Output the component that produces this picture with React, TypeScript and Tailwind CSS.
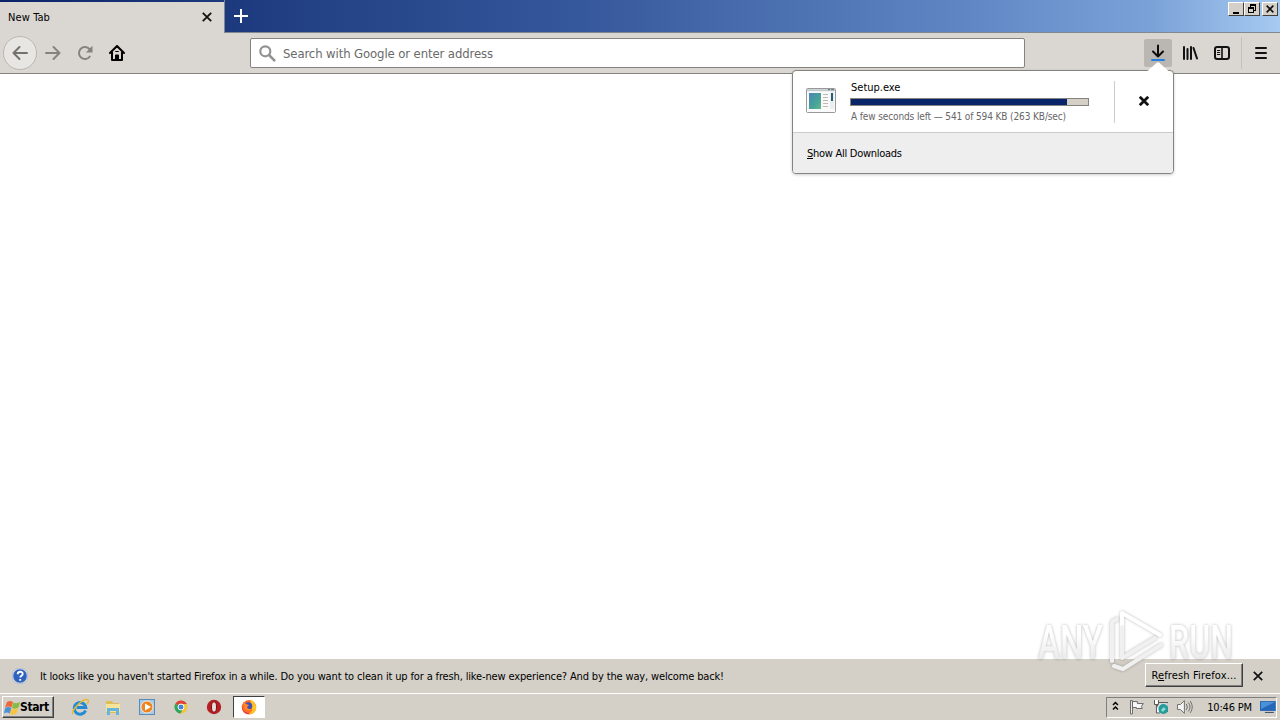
import React from 'react';

const WindowButton: React.FC<{ children: React.ReactNode }> = ({ children }) => (
  <div className="w-4 h-3.5 bg-[#d4d0c8] border border-t-white border-l-white border-r-[#404040] border-b-[#404040] flex items-center justify-center">
    {children}
  </div>
);

const CloseIcon: React.FC<{ size: number; width: number }> = ({ size, width }) => (
  <svg width={size} height={size} viewBox="0 0 10 10" className="shrink-0" stroke="#111" strokeWidth={width} fill="none">
    <path d="M0.8 0.8L9.2 9.2M9.2 0.8L0.8 9.2" />
  </svg>
);

const TitleBar = () => (
  <div className="h-[33px] flex bg-[linear-gradient(90deg,#0a246a_0%,#1f3c80_20%,#35579b_45%,#5f86c3_75%,#7ba2d8_90%,#a6caf0_100%)]">
    <div className="w-56 h-[31px] mt-0.5 bg-[#dad7d2] flex items-start justify-between pl-2 pr-3 shrink-0">
      <span className="mt-2 text-[11px] leading-4 tracking-[0.1px] text-black">New Tab</span>
      <div className="mt-[10px]"><CloseIcon size={10} width={1.8} /></div>
    </div>
    <div className="flex-1 flex justify-between border-b border-l border-[#808890]">
      <svg width="14" height="14" viewBox="0 0 14 14" className="mt-[9px] ml-[9px]" stroke="#fff" strokeWidth="2">
        <path d="M7 0v14M0 7h14" />
      </svg>
      <div className="flex mt-0.5 mr-0.5 h-3.5">
        <WindowButton>
          <svg width="14" height="12" viewBox="0 0 14 12"><path d="M4 9h6v2H4z" fill="#000" /></svg>
        </WindowButton>
        <WindowButton>
          <svg width="14" height="12" viewBox="0 0 14 12" fill="none" stroke="#000" shapeRendering="crispEdges">
            <path d="M5.5 5V2.5h5v5H9M5 1.5h6" />
            <path d="M3.5 5.5h5v4h-5zM3 4.5h6" />
          </svg>
        </WindowButton>
        <div className="w-0.5" />
        <WindowButton><CloseIcon size={8} width={2} /></WindowButton>
      </div>
    </div>
  </div>
);

const Toolbar = () => (
  <div className="h-[41px] bg-[#dad7d2] border-b border-[#85837f] flex items-center">
    <div className="w-[250px] flex items-center pl-[3px] shrink-0">
      <div className="w-[34px] h-[34px] rounded-full bg-[#e8e6e2] border border-[#bbb8b3] flex items-center justify-center">
        <svg width="16" height="16" viewBox="0 0 16 16" fill="none" stroke="#74726e" strokeWidth="2" strokeLinecap="round" strokeLinejoin="round">
          <path d="M15 8H1.5M7.5 2l-6 6 6 6" />
        </svg>
      </div>
      <svg width="16" height="16" viewBox="0 0 16 16" className="ml-2" fill="none" stroke="#85837f" strokeWidth="2" strokeLinecap="round" strokeLinejoin="round">
        <path d="M1 8h13.5M8.5 2l6 6-6 6" />
      </svg>
      <svg width="16" height="16" viewBox="0 0 16 16" className="ml-4" fill="none" stroke="#85837f" strokeWidth="2" strokeLinecap="round">
        <path d="M12.8 11.5A6 6 0 1 1 12.5 4" />
        <path d="M15.5 0.8v6.7H8.8z" fill="#85837f" stroke="none" />
      </svg>
      <svg width="16" height="16" viewBox="0 0 16 16" className="ml-4" fill="none" stroke="#000" strokeWidth="2" strokeLinecap="round" strokeLinejoin="round">
        <path d="M1 8l7-7 7 7M3 7v8h10V7" />
        <path d="M7 14v-3.5h2V14" />
        <path d="M6.7 6.5h2.6" strokeWidth="1" />
      </svg>
    </div>
    <div className="w-[775px] h-[30px] bg-white border border-[#85837f] rounded-[2px] flex items-center pl-2 shrink-0">
      <svg width="17" height="17" viewBox="0 0 17 17" fill="none" stroke="#929292" strokeWidth="2.2" strokeLinecap="round">
        <circle cx="6.3" cy="6.3" r="5" />
        <path d="M10 10l5.3 5.3" strokeWidth="2.6" />
      </svg>
      <span className="ml-[7px] mt-0.5 text-[13px] tracking-[-0.11px] text-[#6a6a6a]">Search with Google or enter address</span>
    </div>
    <div className="flex-1 flex items-center justify-end pr-3">
      <div className="w-7 h-7 bg-[#bab7b2] rounded-[2px] flex items-center justify-center">
        <svg width="16" height="18" viewBox="0 0 16 18" fill="none" stroke="#0c0c0d" strokeWidth="2" strokeLinecap="round" strokeLinejoin="round">
          <path d="M8 1.5v11M3 7.5l5 5 5-5" />
          <path d="M2 16h12" stroke="#2480df" />
        </svg>
      </div>
      <svg width="16" height="16" viewBox="0 0 16 16" className="ml-[10px]" fill="none" stroke="#111" strokeLinecap="round">
        <path d="M2 2v12M5.5 4v10M9 2v12M11.5 3L15 13.5" strokeWidth="2" />
      </svg>
      <svg width="16" height="16" viewBox="0 0 16 16" className="ml-4" fill="none" stroke="#111" strokeWidth="2">
        <rect x="1" y="2" width="14" height="12" rx="2.2" />
        <path d="M8 2v12" strokeWidth="1.6" />
        <path d="M3 5.5h3.2M3 7.5h3.2M3 9.5h3.2" strokeWidth="1" />
      </svg>
      <div className="w-px h-8 bg-[#c4c1bb] ml-[11px]" />
      <svg width="14" height="14" viewBox="0 0 14 14" className="ml-3" stroke="#111" strokeWidth="2" strokeLinecap="round">
        <path d="M2 2h10M2 7h10M2 12h10" />
      </svg>
    </div>
  </div>
);

const DownloadsPanel = () => (
  <div className="absolute left-[792px] top-[70px] w-[382px] h-[104px] border border-[#85837f] rounded-[4px] bg-white shadow-[0_1px_3px_rgba(0,0,0,0.2)]">
    <svg width="22" height="10" viewBox="0 0 22 10" className="absolute right-1 -top-[9px]">
      <path d="M0 9.5L10 0.5h2l10 9z" fill="#fff" />
    </svg>
    <div className="h-[61px] flex">
      <svg width="32" height="28" viewBox="0 0 32 28" className="ml-3 mt-4">
        <defs>
          <linearGradient id="preview" x1="0" y1="0" x2="1" y2="1">
            <stop offset="0" stopColor="#4d84b6" />
            <stop offset="0.6" stopColor="#45a497" />
            <stop offset="1" stopColor="#66b889" />
          </linearGradient>
        </defs>
        <rect x="1.5" y="1.5" width="29" height="24" rx="1" fill="#fafafa" stroke="#999" />
        <path d="M2 3.2h28" stroke="#c2c8cd" strokeWidth="2" />
        <path d="M23 2.7h2M26 2.7h3" stroke="#596a78" />
        <rect x="4" y="6" width="12" height="16" fill="url(#preview)" />
        <path d="M18 7.5h5M18 10.5h5M18 13.5h5M18 16.5h5M18 19.5h5" stroke="#c4b7ad" />
        <rect x="25" y="5" width="4" height="17" fill="#eaeff1" />
        <path d="M27 6v8" stroke="#285c77" strokeWidth="2" />
      </svg>
      <div className="ml-[13px] pt-[10px] w-[239px]">
        <div className="pl-px text-[11px] leading-[14px] text-black">Setup.exe</div>
        <div className="mt-[3px] w-[239px] h-2 bg-[#d4d0c8] border border-[#85837f]">
          <div className="h-full bg-[#0a246a]" style={{ width: '91%' }} />
        </div>
        <div className="mt-1 pl-px text-[10px] leading-[13px] tracking-[-0.12px] text-[#666] whitespace-nowrap">A few seconds left — 541 of 594 KB (263 KB/sec)</div>
      </div>
      <div className="w-px h-[42px] bg-[#ccc] mt-2.5 ml-[25px]" />
      <div className="mt-[25px] ml-6"><CloseIcon size={10} width={2.7} /></div>
    </div>
    <div className="h-[41px] bg-[#eee] border-t border-[#ccc] rounded-b-[3px] flex items-center pl-[14px] pt-0.5 text-[11px] tracking-[-0.27px] text-black">
      <span><u>S</u>how All Downloads</span>
    </div>
  </div>
);

const Watermark = () => (
  <svg width="210" height="76" viewBox="0 0 210 76" className="absolute left-[1030px] top-[602px] overflow-visible drop-shadow-[0_0_1.5px_rgba(0,0,0,0.28)]" fontFamily="Roboto" fontWeight="500">
    <defs>
      <linearGradient id="fade" x1="0" y1="0" x2="0" y2="1">
        <stop offset="0.35" stopColor="#fff" />
        <stop offset="0.8" stopColor="#eaeaea" />
      </linearGradient>
    </defs>
    <g fill="url(#fade)">
      <text x="8" y="57" fontSize="48" textLength="65" lengthAdjust="spacingAndGlyphs">ANY</text>
      <text x="139" y="57" fontSize="48" textLength="64" lengthAdjust="spacingAndGlyphs">RUN</text>
    </g>
    <g fill="none" stroke="#f0f0f0" strokeWidth="4" strokeLinejoin="round" strokeLinecap="round">
      <path d="M82 59V20l5-3" />
      <path d="M92 50V11L130 33" stroke="#fff" />
      <path d="M92 25v31l33-20" />
      <path d="M84 64l9 3 38-24" />
    </g>
  </svg>
);

const NotificationBar = () => (
  <div className="h-[34px] bg-[#d4d0c8] flex items-center text-[11px] text-black">
    <svg width="16" height="16" viewBox="0 0 16 16" className="ml-3">
      <circle cx="8" cy="8" r="7.3" fill="#2f62bd" stroke="#dce5f3" />
      <circle cx="8" cy="8" r="7.8" fill="none" stroke="#8fa2c4" strokeWidth="0.5" />
      <path d="M5.7 6.3c0-3.5 5-3.2 5-.4 0 1.8-2.5 1.8-2.5 3.7M8.2 11v1.8" fill="none" stroke="#fff" strokeWidth="1.9" />
    </svg>
    <span className="ml-3 mt-0.5 tracking-[-0.146px] whitespace-nowrap">It looks like you haven't started Firefox in a while. Do you want to clean it up for a fresh, like-new experience? And by the way, welcome back!</span>
    <div className="flex-1" />
    <button className="w-[98px] h-6 mb-0.5 pt-0.5 border border-t-white border-l-white border-r-[#404040] border-b-[#404040] shadow-[inset_-1px_-1px_#808080] tracking-[0.15px] whitespace-nowrap">
      R<u>e</u>fresh Firefox...
    </button>
    <div className="ml-2.5 mr-[17px]"><CloseIcon size={10} width={1.7} /></div>
  </div>
);

const Taskbar = () => (
  <div className="h-[27px] bg-[#d4d0c8] border-t border-white flex items-center text-[11px] text-black">
    <div className="w-[52px] h-[22px] ml-0.5 border border-t-white border-l-white border-r-[#404040] border-b-[#404040] shadow-[inset_-1px_-1px_#808080] flex items-center">
      <svg width="16" height="17" viewBox="0 0 16 16" className="ml-px shrink-0">
        <path d="M3 2.5q3-2 6 0L7.5 8q-3-2-6.5 0z" fill="#ed6839" />
        <path d="M9.5 3q3 1.5 6.5-.5L14.5 8q-3 2-6.5 .5z" fill="#86bc43" />
        <path d="M1.3 8.5q3-2 6 0L5.8 14q-3-2-6 0z" fill="#4c91d1" />
        <path d="M7.8 9q3 1.5 6.5-.5L12.5 14q-3 2-6.5 .5z" fill="#f8c33e" />
      </svg>
      <span className="font-bold text-[12px] tracking-[-0.4px]">Start</span>
    </div>
    <svg width="18" height="18" viewBox="0 0 18 18" className="ml-[17px]" fill="none">
      <path d="M14.5 12.5A5.8 5.8 0 1 1 14.8 9.5H5.5" stroke="#238bd4" strokeWidth="3" />
      <path d="M2 16C-1 13 13-1 17 2c1 1 0 3-1 4" stroke="#e7b92d" strokeWidth="1.5" />
    </svg>
    <svg width="18" height="18" viewBox="0 0 18 18" className="ml-[15px]">
      <path d="M2 3h6l1 2h6v10H2z" fill="#e0bd58" />
      <path d="M2 6h14v8H2z" fill="#f8e39a" />
      <path d="M3 17v-7h12v7h-3v-4H6v4z" fill="#65b5dc" />
    </svg>
    <svg width="18" height="18" viewBox="0 0 18 18" className="ml-4">
      <rect x="1.5" y="1.5" width="15" height="15" fill="#a9cae5" stroke="#568bbb" />
      <circle cx="9" cy="9" r="6" fill="#ef851f" stroke="#fff" strokeWidth="0.7" />
      <path d="M7 5.5v7l6-3.5z" fill="#fff" />
    </svg>
    <svg width="16" height="16" viewBox="0 0 16 16" className="ml-[17px]">
      <circle cx="8" cy="8" r="6.5" fill="#f4c534" />
      <path d="M8 8L2.3 4.8A6.5 6.5 0 0 1 13.8 5H8z" fill="#db4437" />
      <path d="M8 8L2.3 4.8A6.5 6.5 0 0 0 7.5 14.5L10 10z" fill="#32a361" />
      <circle cx="8" cy="8" r="3" fill="#4285d4" stroke="#fff" />
    </svg>
    <svg width="16" height="16" viewBox="0 0 16 16" className="ml-[17px]">
      <circle cx="8" cy="8" r="7.2" fill="#b51e22" />
      <ellipse cx="8" cy="8" rx="2.5" ry="5.2" fill="#e8dfdc" stroke="#7c0d12" />
    </svg>
    <div className="w-8 h-[22px] ml-[11px] bg-white border border-t-[#404040] border-l-[#404040] border-white flex items-center justify-center">
      <svg width="16" height="16" viewBox="0 0 16 16">
        <circle cx="8" cy="8.3" r="7.2" fill="#ff692b" />
        <path d="M9 .5c5 2 8 7 5 12-2 3-6 3-9 2 5 0 8-4 5-8z" fill="#ffc527" />
        <path d="M1 5c0 7 4 10 9 9-5 3-10-2-9-9z" fill="#e72b54" />
        <circle cx="7.5" cy="7" r="3.8" fill="#464db5" />
        <path d="M2 3l3 2 3 1-2 2c1 3 4 2 5 1-2 5-8 3-8-2z" fill="#ff8a22" />
      </svg>
    </div>
    <div className="flex-1" />
    <div className="h-[21px] w-[171px] mr-[3px] border border-t-[#808080] border-l-[#808080] border-white flex items-center">
      <svg width="7" height="10" viewBox="0 0 7 10" className="ml-[5px] mb-0.5" fill="none" stroke="#000" strokeWidth="1.5">
        <path d="M1 4l2.5-2.5L6 4M1 8.5L3.5 6 6 8.5" />
      </svg>
      <svg width="16" height="16" viewBox="0 0 16 16" className="ml-[10px]" fill="#f8f8f8" stroke="#686868">
        <path d="M1.5 15V1.5h2V15zM3.5 2.5h5v2h6l-2 3 1 2h-6v-1h-4z" />
      </svg>
      <svg width="16" height="16" viewBox="0 0 16 16" className="ml-2">
        <rect x="4.5" y="3.5" width="11" height="9" fill="#d8e2e2" stroke="#555" />
        <path d="M1.5 1v4.5h4V1M3.5 5v9H7" fill="#fff" stroke="#555" />
        <circle cx="10.5" cy="10" r="5" fill="#259c9b" />
        <path d="M8 11l3-3 2 2-3 3z" fill="#8cdad0" />
      </svg>
      <svg width="18" height="16" viewBox="0 0 18 16" className="ml-2" fill="none" stroke="#707070">
        <path d="M1.5 5.5h3l4-4v13l-4-4h-3z" fill="#f5f5f5" />
        <path d="M10.5 5q2 3 0 6M12.5 3.5q3.5 4.5 0 9M14.5 2q4 6 0 12" />
      </svg>
      <span className="ml-[13px] mt-0.5 w-11 tracking-[-0.2px] whitespace-nowrap">10:46 PM</span>
      <svg width="16" height="14" viewBox="0 0 16 14" className="ml-[9px]">
        <path d="M0 1h16v10H0z" fill="#2466b7" />
        <path d="M1 2h14L1 9z" fill="#4a91d6" />
        <path d="M5 12.5h9" stroke="#334b68" />
      </svg>
    </div>
  </div>
);

const App: React.FC = () => (
  <div className="relative w-[1280px] h-[720px] overflow-hidden flex flex-col bg-white [font-family:'DejaVu_Sans_Condensed','DejaVu_Sans',sans-serif]">
    <TitleBar />
    <Toolbar />
    <div className="flex-1" />
    <NotificationBar />
    <Taskbar />
    <DownloadsPanel />
    <Watermark />
  </div>
);

export default App;
